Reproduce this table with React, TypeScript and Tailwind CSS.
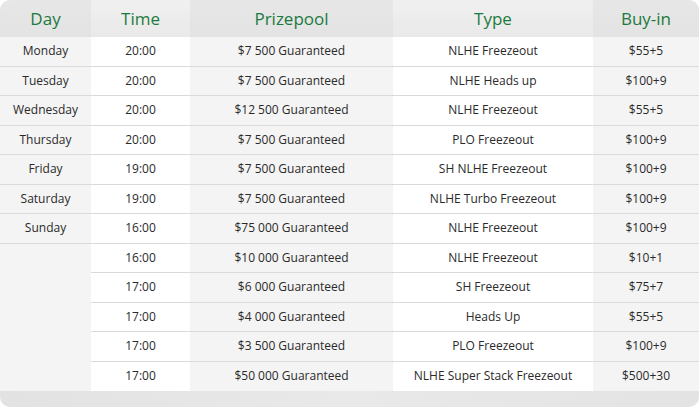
type Row = { day: string; time: string; prize: string; type: string; buyIn: string };

const rows: Row[] = [
  { day: "Monday", time: "20:00", prize: "$7 500 Guaranteed", type: "NLHE Freezeout", buyIn: "$55+5" },
  { day: "Tuesday", time: "20:00", prize: "$7 500 Guaranteed", type: "NLHE Heads up", buyIn: "$100+9" },
  { day: "Wednesday", time: "20:00", prize: "$12 500 Guaranteed", type: "NLHE Freezeout", buyIn: "$55+5" },
  { day: "Thursday", time: "20:00", prize: "$7 500 Guaranteed", type: "PLO Freezeout", buyIn: "$100+9" },
  { day: "Friday", time: "19:00", prize: "$7 500 Guaranteed", type: "SH NLHE Freezeout", buyIn: "$100+9" },
  { day: "Saturday", time: "19:00", prize: "$7 500 Guaranteed", type: "NLHE Turbo Freezeout", buyIn: "$100+9" },
  { day: "Sunday", time: "16:00", prize: "$75 000 Guaranteed", type: "NLHE Freezeout", buyIn: "$100+9" },
  { day: "", time: "16:00", prize: "$10 000 Guaranteed", type: "NLHE Freezeout", buyIn: "$10+1" },
  { day: "", time: "17:00", prize: "$6 000 Guaranteed", type: "SH Freezeout", buyIn: "$75+7" },
  { day: "", time: "17:00", prize: "$4 000 Guaranteed", type: "Heads Up", buyIn: "$55+5" },
  { day: "", time: "17:00", prize: "$3 500 Guaranteed", type: "PLO Freezeout", buyIn: "$100+9" },
  { day: "", time: "17:00", prize: "$50 000 Guaranteed", type: "NLHE Super Stack Freezeout", buyIn: "$500+30" },
];

const cols = "grid grid-cols-[91px_99px_203px_200px_106px]";

export default function App() {
  return (
    <div className="w-[699px] h-[407px] bg-white font-['Open_Sans',sans-serif]">
      <div className="rounded-[10px] overflow-hidden">
        <div className={`${cols} h-[37px] text-[17px] text-[#1b7a3e] bg-gradient-to-b from-[#ededed] to-[#e4e4e4]`}>
          <div className="flex items-center justify-center bg-[#e3e3e3]/60">Day</div>
          <div className="flex items-center justify-center bg-white/20">Time</div>
          <div className="flex items-center justify-center bg-[#e3e3e3]/60">Prizepool</div>
          <div className="flex items-center justify-center bg-white/20">Type</div>
          <div className="flex items-center justify-center bg-[#e3e3e3]/60">Buy-in</div>
        </div>
        {rows.map((r, i) => {
          const last = i === rows.length - 1;
          const line = last ? "" : "border-b border-[#dadada]";
          return (
            <div key={i} className={`${cols} h-[29.5px] text-[12px] text-[#2a2a2a]`}>
              <div className={`flex items-center justify-center bg-[#f4f4f4] ${r.day || i === 6 ? line : ""}`}>
                {r.day}
              </div>
              <div className={`flex items-center justify-center bg-white ${line}`}>{r.time}</div>
              <div className={`flex items-center justify-center bg-[#f4f4f4] ${line}`}>{r.prize}</div>
              <div className={`flex items-center justify-center bg-white ${line}`}>{r.type}</div>
              <div className={`flex items-center justify-center bg-[#f4f4f4] ${line}`}>{r.buyIn}</div>
            </div>
          );
        })}
        <div className="h-[16px] bg-gradient-to-r from-[#e2e2e2] via-[#e9e9e9] to-[#e3e3e3]" />
      </div>
    </div>
  );
}
